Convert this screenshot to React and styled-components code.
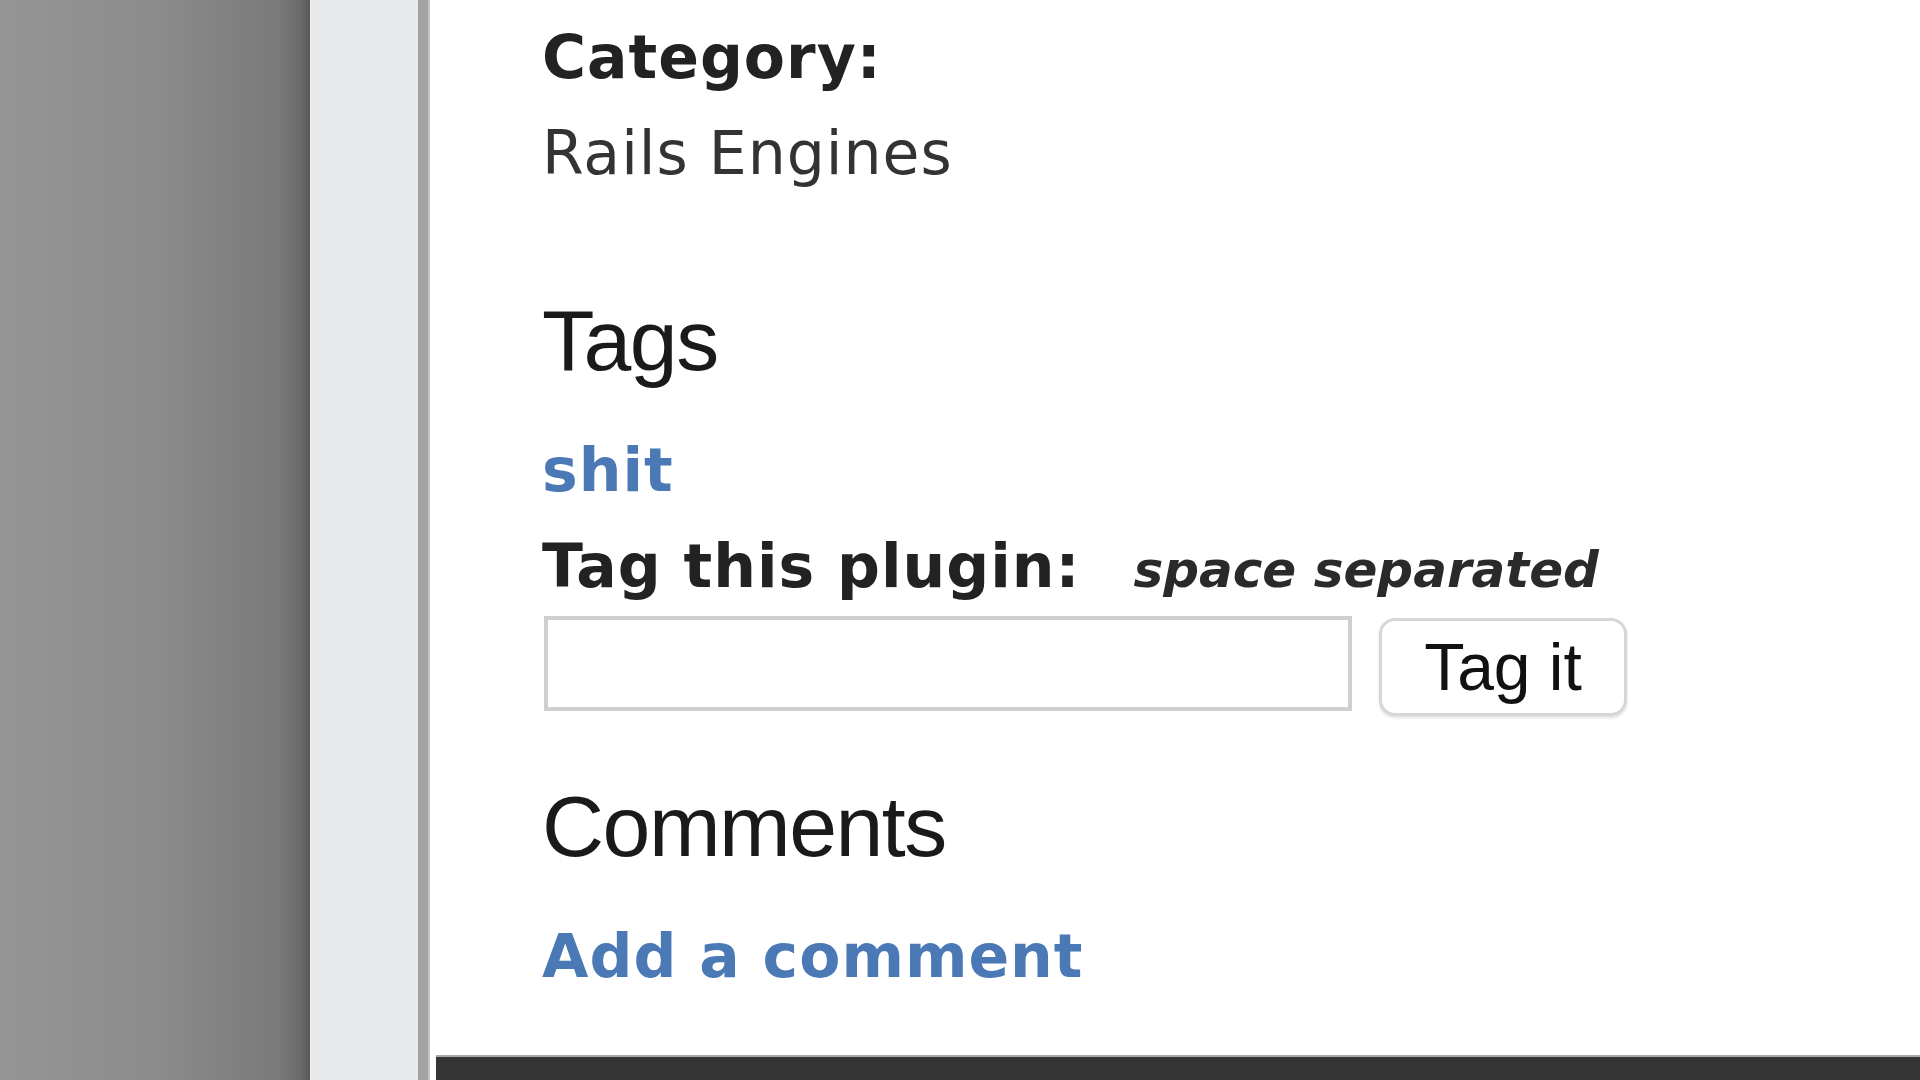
import React from 'react';
import styled, { createGlobalStyle } from 'styled-components';

const GlobalStyle = createGlobalStyle`
  html, body {
    margin: 0;
    padding: 0;
    background: #fff;
  }
`;

const Page = styled.div`
  display: flex;
  width: 1920px;
  height: 1080px;
  overflow: hidden;
`;

const Backdrop = styled.div`
  width: 310px;
  flex-shrink: 0;
  background: linear-gradient(to right, #959595 0%, #8c8c8c 50%, #7a7a7a 90%, #6a6a6a 97%, #585858 100%);
`;

const Gutter = styled.div`
  width: 108px;
  flex-shrink: 0;
  background: #e8e9eb;
  border-left: 1px solid #eeeff0;
  box-sizing: border-box;
`;

const Edge = styled.div`
  width: 12px;
  flex-shrink: 0;
  background: #a2a2a2;
  border-right: 2px solid #c4c4c4;
  box-sizing: border-box;
`;

const Main = styled.div`
  flex: 1;
  display: flex;
  flex-direction: column;
  background: #fff;
`;

const Content = styled.div`
  flex: 1;
  padding: 9px 0 0 112px;
  font-family: 'DejaVu Sans', Verdana, sans-serif;
  font-size: 60px;
  line-height: 96px;
  letter-spacing: 1px;
  color: #333;
`;

const Label = styled.div`
  font-weight: bold;
  color: #222;
`;

const Value = styled.div`
  color: #333;
`;

const Heading = styled.h2`
  margin: ${p => p.$top}px 0 0;
  font-family: 'Liberation Sans', Arial, sans-serif;
  font-weight: normal;
  font-size: 86px;
  line-height: 86px;
  letter-spacing: -1.5px;
  color: #1a1a1a;
`;

const Link = styled.a`
  display: block;
  margin-top: ${p => p.$top || 0}px;
  font-weight: bold;
  color: #4b79b6;
  text-decoration: none;
`;

const Hint = styled.span`
  margin-left: 31px;
  font-size: 50px;
  font-style: italic;
  font-weight: bold;
  letter-spacing: 0;
  color: #2a2a2a;
`;

const TagRow = styled.div`
  display: flex;
  align-items: flex-start;
  gap: 27px;
  margin-top: -2px;
  margin-left: 2px;
`;

const TagInput = styled.input`
  width: 808px;
  height: 95px;
  box-sizing: border-box;
  border: 4px solid #cfcfcf;
  background: #fff;
  outline: none;
`;

const TagButton = styled.button`
  width: 248px;
  height: 98px;
  margin-top: 2px;
  box-sizing: border-box;
  border: 3px solid #d6d6d6;
  border-radius: 16px;
  background: #fff;
  box-shadow: 0 2px 3px rgba(0, 0, 0, 0.12);
  font-family: 'Liberation Sans', Arial, sans-serif;
  font-size: 66px;
  letter-spacing: 0;
  color: #111;
  padding: 0;
`;

const Footer = styled.div`
  height: 23px;
  margin-left: 6px;
  background: #353535;
  border-top: 2px solid #a9a9a9;
`;

export default function App() {
  return (
    <>
      <GlobalStyle />
      <Page>
        <Backdrop />
        <Gutter />
        <Edge />
        <Main>
          <Content>
            <Label>Category:</Label>
            <Value>Rails Engines</Value>

            <Heading $top={96}>Tags</Heading>
            <Link href="#" $top={39}>shit</Link>
            <Label>
              Tag this plugin: <Hint>space separated</Hint>
            </Label>
            <TagRow>
              <TagInput type="text" />
              <TagButton type="button">Tag it</TagButton>
            </TagRow>

            <Heading $top={67}>Comments</Heading>
            <Link href="#" $top={39}>Add a comment</Link>
          </Content>
          <Footer />
        </Main>
      </Page>
    </>
  );
}
